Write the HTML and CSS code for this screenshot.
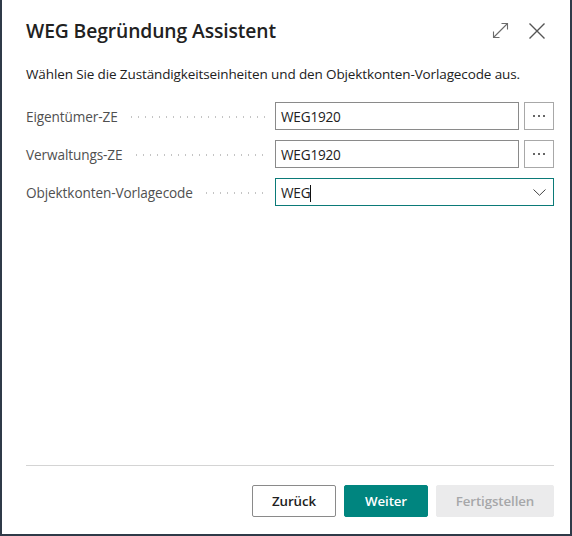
FILE: index.html
```html
<!DOCTYPE html>
<html lang="de">
<head>
<meta charset="utf-8">
<title>WEG Begründung Assistent</title>
<link rel="stylesheet" href="styles.css">
</head>
<body>
<div class="dialog">
  <div class="header">
    <h1 class="title">WEG Begründung Assistent</h1>
    <div class="header-icons">
      <svg class="icon" width="17" height="17" viewBox="0 0 17 17"><path d="M1.5 15.5 L15.5 1.5 M9.5 1.5 H15.5 V7.5 M1.5 9.5 V15.5 H7.5" fill="none" stroke="#6b6b6b" stroke-width="1.1"/></svg>
      <svg class="icon close" width="18" height="18" viewBox="0 0 18 18"><path d="M1.5 1.5 L16.5 16.5 M16.5 1.5 L1.5 16.5" fill="none" stroke="#555" stroke-width="1.4"/></svg>
    </div>
  </div>
  <p class="intro">Wählen Sie die Zuständigkeitseinheiten und den Objektkonten-Vorlagecode aus.</p>
  <div class="form">
    <div class="row">
      <div class="label"><span>Eigentümer-ZE</span><span class="dots"></span></div>
      <div class="field"><div class="input">WEG1920</div><div class="more"><i></i><i></i><i></i></div></div>
    </div>
    <div class="row">
      <div class="label"><span>Verwaltungs-ZE</span><span class="dots"></span></div>
      <div class="field"><div class="input">WEG1920</div><div class="more"><i></i><i></i><i></i></div></div>
    </div>
    <div class="row">
      <div class="label"><span>Objektkonten-Vorlagecode</span><span class="dots"></span></div>
      <div class="field"><div class="input select"><span>WEG<span class="caret"></span></span>
        <svg width="13" height="7" viewBox="0 0 13 7"><path d="M0.5 0.5 L6.5 6.3 L12.5 0.5" fill="none" stroke="#444" stroke-width="1"/></svg></div></div>
    </div>
  </div>
  <div class="spacer"></div>
  <div class="footer">
    <button class="btn secondary">Zurück</button>
    <button class="btn primary">Weiter</button>
    <button class="btn disabled">Fertigstellen</button>
  </div>
</div>
</body>
</html>
```
FILE: styles.css
```css
html, body {
  margin: 0;
  padding: 0;
  background: #2f3a48;
  width: 572px;
  height: 536px;
  overflow: hidden;
}
body {
  font-family: "Open Sans", "Noto Sans", sans-serif;
  color: #212121;
}
.dialog {
  margin-left: 2px;
  width: 568px;
  height: 534px;
  background: #fff;
  display: flex;
  flex-direction: column;
  box-sizing: border-box;
  padding: 0 16px 17px 24px;
}
.header {
  display: flex;
  align-items: center;
  justify-content: space-between;
  height: 60px;
}
.title {
  margin: 0;
  font-size: 19.3px;
  font-weight: 600;
  letter-spacing: -0.1px;
  color: #212121;
  padding-top: 1px;
}
.header-icons {
  display: flex;
  align-items: center;
  gap: 19px;
  padding-top: 1px;
  padding-right: 8px;
}
.intro {
  margin: 5px 0 0 0;
  font-size: 13.5px;
  letter-spacing: -0.12px;
  line-height: 18px;
  color: #212121;
}
.form {
  margin-top: 19px;
  display: flex;
  flex-direction: column;
  gap: 10px;
}
.row {
  display: flex;
  align-items: center;
  height: 28px;
}
.label {
  width: 249px;
  display: flex;
  align-items: center;
  font-size: 13.6px;
  letter-spacing: -0.1px;
  color: #505050;
}
.dots {
  flex: 1;
  margin: 2px 8px 0 10px;
  height: 2px;
  background-image: radial-gradient(circle, #c4c4c4 0.8px, transparent 1px);
  background-size: 7px 2px;
  background-repeat: repeat-x;
}
.field {
  flex: 1;
  display: flex;
  gap: 5px;
}
.input {
  flex: 1;
  height: 28px;
  box-sizing: border-box;
  border: 1px solid #8a8a8a;
  font-size: 13.6px;
  letter-spacing: -0.2px;
  display: flex;
  align-items: center;
  padding-left: 5px;
  color: #212121;
}
.more {
  width: 30px;
  height: 28px;
  box-sizing: border-box;
  border: 1px solid #a8a8a8;
  display: flex;
  align-items: center;
  justify-content: center;
  gap: 3px;
}
.more i {
  width: 2px;
  height: 2px;
  border-radius: 1px;
  background: #333;
}
.select {
  border-color: #0b7a78;
  justify-content: space-between;
  padding-right: 7px;
}
.caret {
  display: inline-block;
  width: 1px;
  height: 17px;
  background: #111;
  vertical-align: -4px;
}
.spacer { flex: 1; }
.footer {
  border-top: 1px solid #d4d4d4;
  padding-top: 19px;
  display: flex;
  justify-content: flex-end;
  gap: 8px;
}
.btn {
  font-family: "Open Sans", "Noto Sans", sans-serif;
  font-size: 13.3px;
  font-weight: 600;
  height: 32px;
  border-radius: 2px;
  box-sizing: border-box;
  padding: 0;
  letter-spacing: -0.1px;
}
.secondary {
  width: 84px;
  background: #fff;
  border: 1px solid #8a8a8a;
  color: #212121;
}
.primary {
  width: 84px;
  background: #00857f;
  border: 1px solid #00857f;
  color: #fff;
}
.disabled {
  width: 118px;
  background: #ebebec;
  border: 1px solid #ebebec;
  color: #a6a7a9;
}
```
